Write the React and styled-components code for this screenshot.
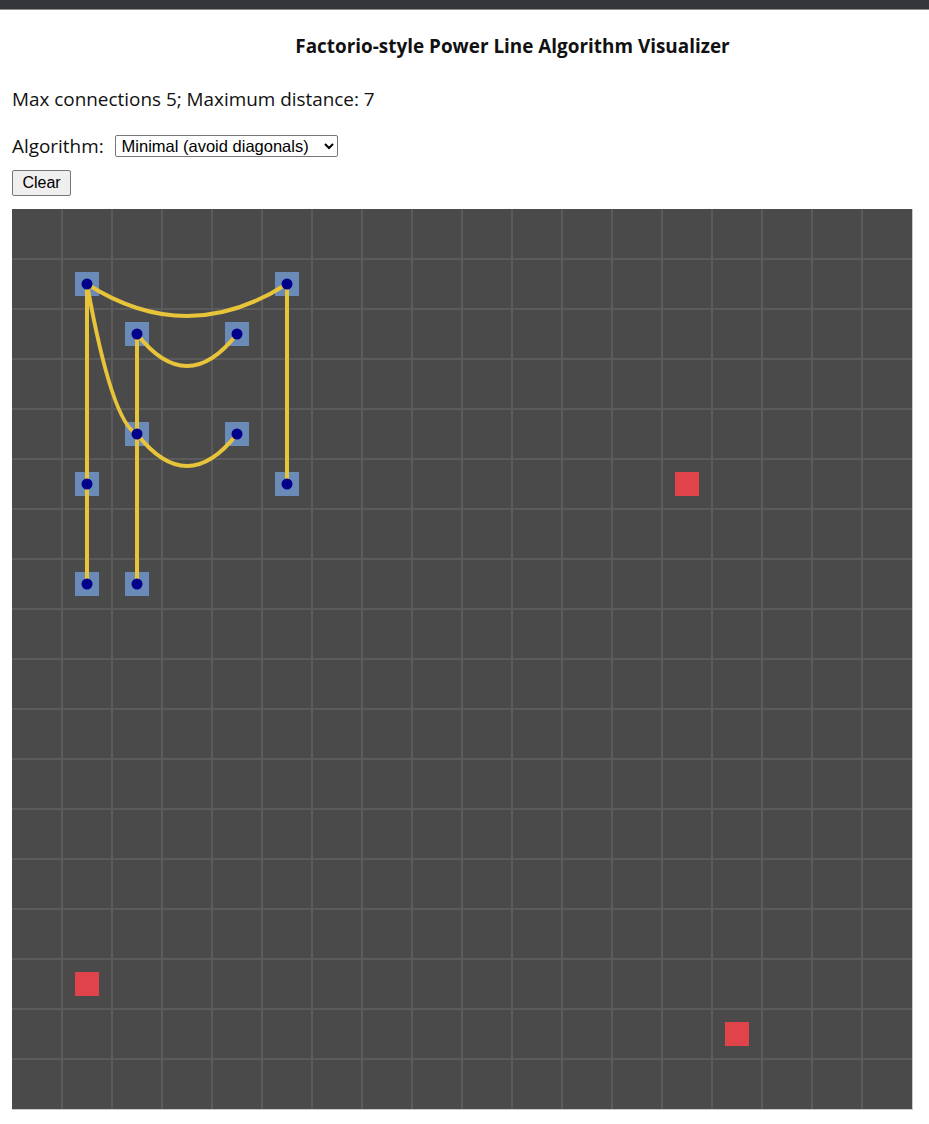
import React, { useState } from "react";
import styled, { createGlobalStyle } from "styled-components";

const GlobalStyle = createGlobalStyle`
  html, body {
    margin: 0;
    padding: 0;
    background: #ffffff;
  }
  body {
    font-family: "Open Sans", "Noto Sans", sans-serif;
    color: #111;
  }
`;

const CELL = 50;
const COLS = 18;
const ROWS = 18;
const SAG = 64;

const poles = [
  [1, 1], [5, 1], [2, 2], [4, 2], [2, 4], [4, 4],
  [1, 5], [5, 5], [1, 7], [2, 7],
];

const consumers = [
  [13, 5], [1, 15], [14, 16],
];

const wires = [
  [[1, 1], [5, 1]],
  [[2, 2], [4, 2]],
  [[1, 1], [2, 4]],
  [[2, 4], [4, 4]],
  [[1, 1], [1, 5]],
  [[1, 5], [1, 7]],
  [[2, 2], [2, 4]],
  [[2, 4], [2, 7]],
  [[5, 1], [5, 5]],
];

const center = ([c, r]) => [c * CELL + CELL / 2, r * CELL + CELL / 2];

const TopBar = styled.div`
  height: 9px;
  background: #35363a;
  border-bottom: 1px solid #8d8e91;
`;

const Page = styled.div`
  padding: 0 12px;
`;

const Title = styled.h1`
  margin: 24px 0 0;
  padding-left: 96px;
  text-align: center;
  font-size: 18.9px;
  font-weight: 700;
  line-height: 24px;
`;

const Info = styled.p`
  margin: 29px 0 0;
  font-size: 18.9px;
  line-height: 24px;
`;

const Controls = styled.div`
  display: flex;
  align-items: center;
  gap: 11px;
  margin-top: 23px;
  font-size: 18.9px;
  line-height: 24px;
`;

const Select = styled.select`
  font-family: "Liberation Sans", Arial, sans-serif;
  font-size: 16.5px;
  height: 22px;
  width: 223px;
  padding: 0 2px;
  border: 1px solid #767676;
  border-radius: 2px;
  background: #fff;
  color: #000;
`;

const ClearButton = styled.button`
  display: block;
  margin-top: 12px;
  height: 26px;
  width: 59px;
  font-family: "Liberation Sans", Arial, sans-serif;
  font-size: 16px;
  color: #000;
  background: #efefef;
  border: 1px solid #767676;
  border-radius: 2px;
  padding: 0;
`;

const Board = styled.svg`
  display: block;
  margin-top: 13px;
  border-right: 1px solid #c9c9c9;
  border-bottom: 1px solid #c9c9c9;
`;

function Grid() {
  const lines = [];
  for (let i = 1; i < COLS; i++) {
    lines.push(<line key={"v" + i} x1={i * CELL} y1={0} x2={i * CELL} y2={ROWS * CELL} />);
  }
  for (let j = 1; j < ROWS; j++) {
    lines.push(<line key={"h" + j} x1={0} y1={j * CELL} x2={COLS * CELL} y2={j * CELL} />);
  }
  return (
    <g stroke="#5b5b5b" strokeWidth="2">
      {lines}
    </g>
  );
}

export default function App() {
  const [algorithm, setAlgorithm] = useState("minimal");

  return (
    <>
      <GlobalStyle />
      <TopBar />
      <Page>
        <Title>Factorio-style Power Line Algorithm Visualizer</Title>
        <Info>Max connections 5; Maximum distance: 7</Info>
        <Controls>
          <label htmlFor="algo">Algorithm:</label>
          <Select id="algo" value={algorithm} onChange={(e) => setAlgorithm(e.target.value)}>
            <option value="minimal">Minimal (avoid diagonals)</option>
            <option value="nearest">Nearest neighbour</option>
          </Select>
        </Controls>
        <ClearButton>Clear</ClearButton>
        <Board width={COLS * CELL} height={ROWS * CELL} viewBox={`0 0 ${COLS * CELL} ${ROWS * CELL}`}>
          <rect width={COLS * CELL} height={ROWS * CELL} fill="#4a4a4a" />
          <Grid />
          {consumers.map((p, i) => {
            const [x, y] = center(p);
            return <rect key={"c" + i} x={x - 12} y={y - 12} width="24" height="24" fill="#e0444a" />;
          })}
          {poles.map((p, i) => {
            const [x, y] = center(p);
            return <rect key={"p" + i} x={x - 12} y={y - 12} width="24" height="24" fill="#6a8bb8" />;
          })}
          {wires.map(([a, b], i) => {
            const [x1, y1] = center(a);
            const [x2, y2] = center(b);
            const cx = (x1 + x2) / 2;
            const cy = (y1 + y2) / 2 + (x1 === x2 ? 0 : SAG);
            return (
              <path
                key={"w" + i}
                d={`M${x1} ${y1} Q${cx} ${cy} ${x2} ${y2}`}
                fill="none"
                stroke="#e8c43a"
                strokeWidth="4"
              />
            );
          })}
          {poles.map((p, i) => {
            const [x, y] = center(p);
            return <circle key={"d" + i} cx={x} cy={y} r="5.5" fill="#00008b" />;
          })}
        </Board>
      </Page>
    </>
  );
}
